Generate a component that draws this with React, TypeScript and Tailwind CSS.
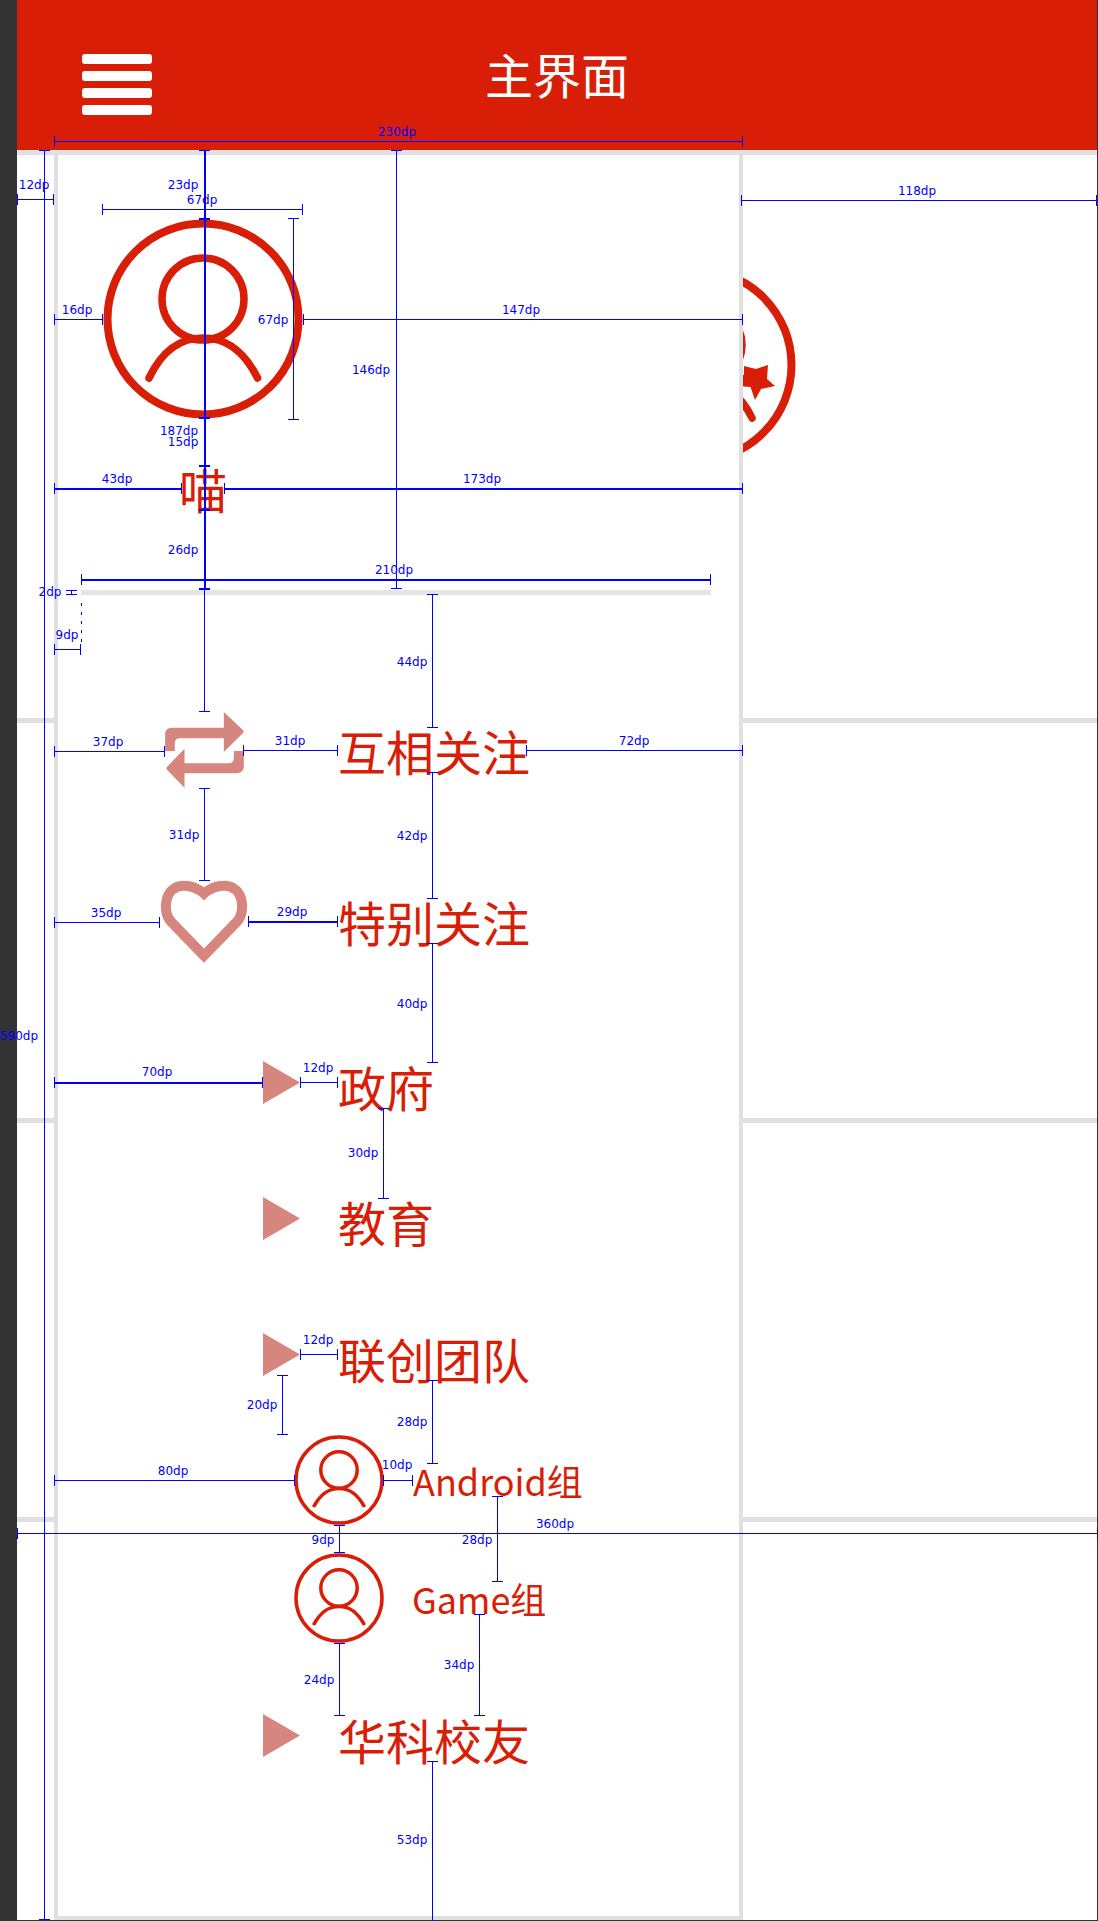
import React from "react";

const RED = "#d81e06";
const BLUE = "#0000ff";
const CJK = { fontFamily: '"Noto Sans CJK SC", "Noto Sans", sans-serif' };

type H = [number, number, number, number?];
// y, x1, x2, thickness
const hLines: H[] = [
  [141, 54, 743], [199, 17, 54], [209, 102, 303], [319, 54, 103], [319, 303, 743],
  [488, 54, 182, 2], [488, 224, 743, 2], [579, 81, 711, 2], [649, 54, 81],
  [751, 54, 165], [750, 243, 338], [750, 526, 743], [922, 54, 160], [921, 248, 338, 2],
  [1082, 54, 263, 2], [1082, 300, 338], [1354, 300, 338], [1480, 54, 295], [1480, 383, 413],
  [1533, 17, 1098], [200, 741, 1097],
];
type V = [number, number, number, number?, boolean?];
// x, y1, y2, thickness, no ticks
const vLines: V[] = [
  [44, 150, 1920], [204, 150, 219, 2], [204, 219, 418, 2], [204, 418, 466, 2], [204, 466, 510, 2],
  [204, 510, 589, 2], [204, 589, 712], [293, 218, 420], [396, 150, 589], [432, 594, 728],
  [432, 772, 899], [204, 788, 881], [432, 943, 1063], [383, 1108, 1199], [282, 1375, 1435],
  [432, 1380, 1464], [339, 1525, 1553], [497, 1496, 1582], [479, 1614, 1716], [339, 1643, 1716],
  [432, 1761, 1930], [71, 590, 595],
];

const labels: [string, number, number][] = [
  ["230dp", 397, 132], ["12dp", 34, 185], ["23dp", 183, 185], ["67dp", 202, 200],
  ["67dp", 273, 320], ["16dp", 77, 310], ["147dp", 521, 310], ["146dp", 371, 370],
  ["187dp", 179, 431], ["15dp", 183, 442], ["43dp", 117, 479], ["173dp", 482, 479],
  ["26dp", 183, 550], ["210dp", 394, 570], ["2dp", 50, 592], ["9dp", 67, 635],
  ["44dp", 412, 662], ["37dp", 108, 742], ["31dp", 290, 741], ["72dp", 634, 741],
  ["31dp", 184, 835], ["42dp", 412, 836], ["35dp", 106, 913], ["29dp", 292, 912],
  ["40dp", 412, 1004], ["590dp", 19, 1036], ["70dp", 157, 1072], ["12dp", 318, 1068],
  ["30dp", 363, 1153], ["12dp", 318, 1340], ["20dp", 262, 1405], ["28dp", 412, 1422],
  ["80dp", 173, 1471], ["10dp", 397, 1465], ["360dp", 555, 1524], ["9dp", 323, 1540],
  ["28dp", 477, 1540], ["34dp", 459, 1665], ["24dp", 319, 1680], ["53dp", 412, 1840],
  ["118dp", 917, 191],
];

function Annotations() {
  let d = "";
  let thick = "";
  for (const [y, a, b, t] of hLines) {
    const seg = `M${a} ${y + 0.5}H${b}M${a + 0.5} ${y - 5}V${y + 6}M${b - 0.5} ${y - 5}V${y + 6}`;
    if (t === 2) {
      thick += `M${a} ${y + 1}H${b}`;
      d += `M${a + 0.5} ${y - 5}V${y + 6}M${b - 0.5} ${y - 5}V${y + 6}`;
    } else d += seg;
  }
  for (const [x, a, b, t] of vLines) {
    d += `M${x - 5} ${a + 0.5}H${x + 6}M${x - 5} ${b - 0.5}H${x + 6}`;
    if (t === 2) thick += `M${x + 1} ${a}V${b}`;
    else d += `M${x + 0.5} ${a}V${b}`;
  }
  return (
    <div className="absolute inset-0 pointer-events-none">
      <svg className="absolute left-0 top-0" width={1098} height={1921} shapeRendering="crispEdges">
        <path d={d} stroke={BLUE} strokeWidth={1} fill="none" />
        <path d={thick} stroke={BLUE} strokeWidth={2} fill="none" />
        <path d="M81.5 603V645" stroke={BLUE} strokeWidth={1} strokeDasharray="3 6" fill="none" />
      </svg>
      {labels.map(([t, x, y], i) => (
        <div
          key={i}
          className="absolute text-[12px] leading-[14px] whitespace-nowrap text-[#0000ff] [font-family:'DejaVu_Sans',sans-serif]"
          style={{ left: x, top: y, transform: "translate(-50%,-50%)" }}
        >
          {t}
        </div>
      ))}
    </div>
  );
}

function BigAvatar() {
  return (
    <svg width={200} height={200} viewBox="0 0 200 200" fill="none" stroke={RED}>
      <circle cx={100} cy={100} r={95.5} strokeWidth={8} />
      <circle cx={100} cy={80} r={41} strokeWidth={7.5} />
      <path d="M46 159C60 130 78 119 100 119C122 119 140 130 154.6 159" strokeWidth={7.5} strokeLinecap="round" />
    </svg>
  );
}

function SmallAvatar() {
  return (
    <svg width={90} height={90} viewBox="0 0 90 90" fill="none" stroke={RED}>
      <circle cx={45} cy={45} r={43} strokeWidth={3.5} />
      <circle cx={45} cy={35} r={18.2} strokeWidth={3.5} />
      <path d="M19.5 72C27 58 35 53.5 45 53.5C55 53.5 63 58 70.5 72" strokeWidth={3.5} />
    </svg>
  );
}

function MainAvatar() {
  return (
    <svg width={200} height={200} viewBox="596 265 200 200" fill="none">
      <circle cx={696} cy={365} r={95.5} stroke={RED} strokeWidth={8} />
      <circle cx={704} cy={345} r={38} stroke={RED} strokeWidth={7.5} />
      <path d="M700 380C722 380 741 395 752 418" stroke={RED} strokeWidth={7.5} strokeLinecap="round" />
      <polygon fill={RED} points="755,400 750.5,387 736,386 744,374 744,366 756,369 768,365 767,379 775,386 761,389" />
    </svg>
  );
}

function Triangle() {
  return (
    <svg width={37} height={43} viewBox="0 0 37 43" className="block">
      <polygon points="0,0 37,21.5 0,43" fill="#d6867f" />
    </svg>
  );
}

function Retweet() {
  return (
    <svg width={82} height={78} viewBox="40 35 245 234" className="block" fill="#d6867f">
      <path d="M46 155V105Q46 85 66 85H222V38L279 92Q284 97 279 102L222 158V117H90Q75 117 75 132V155Z" />
      <path d="M282 155V200Q282 222 260 222H104V265L52 212Q47 207 52 202L104 148V192H235Q252 192 252 177V155Z" />
    </svg>
  );
}

function Heart() {
  return (
    <svg width={92} height={85} viewBox="25 28 276 255" className="block" fill="none" stroke="#d6867f" strokeWidth={30}>
      <path d="M163 258L65 157C35 125 45 50 100 48C130 47 150 60 163 72C176 60 196 47 226 48C281 50 291 125 261 157Z" />
    </svg>
  );
}

const rowText = "text-[48px] leading-[60px] text-[#d81e06] whitespace-nowrap";

export default function App() {
  return (
    <div className="relative w-[1098px] h-[1921px] bg-[#333333] pl-[17px] pr-px pb-px overflow-hidden" style={CJK}>
      <div className="relative h-full bg-white flex flex-col">
        <header className="h-[150px] shrink-0 bg-[#d81e06] grid grid-cols-[1fr_auto_1fr]">
          <div className="pl-[65px] pt-[54px] flex flex-col gap-[7px]">
            <div className="w-[70px] h-[10px] rounded-[3px] bg-white" />
            <div className="w-[70px] h-[10px] rounded-[3px] bg-white" />
            <div className="w-[70px] h-[10px] rounded-[3px] bg-white" />
            <div className="w-[70px] h-[10px] rounded-[3px] bg-white" />
          </div>
          <div className="pt-[38px] text-[48px] leading-[70px] text-white">主界面</div>
          <div />
        </header>

        {/* main list behind the drawer */}
        <div className="flex-1 flex flex-col">
          <div className="h-[5px] bg-[#e0e0e0]" />
          <div className="h-[563px] pl-[579px] pt-[110px]">
            <MainAvatar />
          </div>
          <div className="h-[5px] bg-[#e0e0e0]" />
          <div className="h-[395px]" />
          <div className="h-[5px] bg-[#e0e0e0]" />
          <div className="h-[394px]" />
          <div className="h-[5px] bg-[#e0e0e0]" />
        </div>

        {/* drawer */}
        <aside className="absolute left-[37px] top-[150px] w-[689px] bottom-0 bg-white border-x-[4px] border-b-[4px] border-[#e0e0e0] border-t-[5px] flex flex-col">
          <div className="ml-[45px] mt-[64px] w-[200px] flex flex-col items-center">
            <BigAvatar />
            <div className="mt-[39px] text-[48px] leading-[60px] text-[#d81e06]">喵</div>
          </div>
          <div className="mt-[72px] ml-[23px] w-[630px] h-[5px] bg-[#e5e5e5]" />

          <div className="mt-[125px] h-[60px] flex items-center">
            <div className="w-[280px] pl-[105px]"><Retweet /></div>
            <span className={rowText}>互相关注</span>
          </div>
          <div className="mt-[111px] h-[60px] flex items-center">
            <div className="w-[280px] pl-[100px]"><Heart /></div>
            <span className={rowText}>特别关注</span>
          </div>
          <div className="mt-[105px] h-[60px] flex items-center">
            <div className="w-[280px] pl-[205px] pb-[8px]"><Triangle /></div>
            <span className={rowText}>政府</span>
          </div>
          <div className="mt-[75px] h-[60px] flex items-center">
            <div className="w-[280px] pl-[205px] pb-[6px]"><Triangle /></div>
            <span className={rowText}>教育</span>
          </div>
          <div className="mt-[77px] h-[60px] flex items-center">
            <div className="w-[280px] pl-[205px] pb-[8px]"><Triangle /></div>
            <span className={rowText}>联创团队</span>
          </div>
          <div className="mt-[47px] h-[90px] flex items-center pl-[236px] gap-[29px]">
            <SmallAvatar />
            <span className="text-[36px] leading-[50px] text-[#d81e06]">Android组</span>
          </div>
          <div className="mt-[28px] h-[90px] flex items-center pl-[236px] gap-[28px]">
            <SmallAvatar />
            <span className="text-[36px] leading-[50px] text-[#d81e06]">Game组</span>
          </div>
          <div className="mt-[66px] h-[60px] flex items-center">
            <div className="w-[280px] pl-[205px] pb-[8px]"><Triangle /></div>
            <span className={rowText}>华科校友</span>
          </div>
        </aside>
      </div>
      <Annotations />
    </div>
  );
}
